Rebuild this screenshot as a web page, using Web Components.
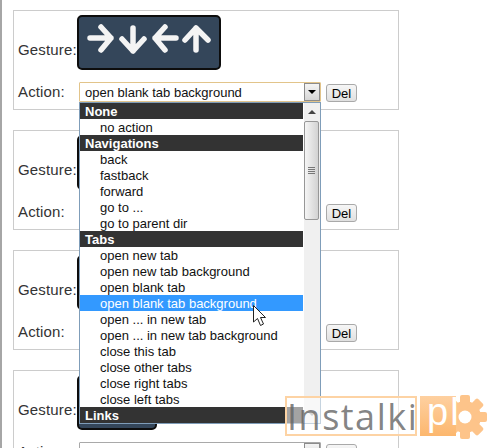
<!DOCTYPE html>
<html>
<head>
<meta charset="utf-8">
<style>
  html, body { margin: 0; padding: 0; height: 100%; overflow: hidden; background: #fff; }
</style>
</head>
<body>
<gesture-page>
  <gesture-card>
    <gesture-box slot="gesture" wide></gesture-box>
    <action-select slot="action" value="open blank tab background" focused>
      <drop-list>
        <list-row head>None</list-row>
        <list-row>no action</list-row>
        <list-row head>Navigations</list-row>
        <list-row>back</list-row>
        <list-row>fastback</list-row>
        <list-row>forward</list-row>
        <list-row>go to ...</list-row>
        <list-row>go to parent dir</list-row>
        <list-row head>Tabs</list-row>
        <list-row>open new tab</list-row>
        <list-row>open new tab background</list-row>
        <list-row>open blank tab</list-row>
        <list-row selected>open blank tab background</list-row>
        <list-row>open ... in new tab</list-row>
        <list-row>open ... in new tab background</list-row>
        <list-row>close this tab</list-row>
        <list-row>close other tabs</list-row>
        <list-row>close right tabs</list-row>
        <list-row>close left tabs</list-row>
        <list-row head>Links</list-row>
      </drop-list>
    </action-select>
  </gesture-card>
  <gesture-card>
    <gesture-box slot="gesture"></gesture-box>
    <action-select slot="action" value="back"></action-select>
  </gesture-card>
  <gesture-card>
    <gesture-box slot="gesture"></gesture-box>
    <action-select slot="action" value="forward"></action-select>
  </gesture-card>
  <gesture-card>
    <gesture-box slot="gesture"></gesture-box>
    <action-select slot="action" value="reload"></action-select>
  </gesture-card>
  <mouse-cursor></mouse-cursor>
  <instalki-mark></instalki-mark>
</gesture-page>

<script>
class GesturePage extends HTMLElement {
  constructor() {
    super();
    this.attachShadow({ mode: "open" });
    this.shadowRoot.innerHTML = `
      <style>
        :host {
          display: block;
          position: relative;
          height: 448px;
          box-sizing: border-box;
          border-left: 2px solid #a6a6a6;
          padding: 10px 0 0 11px;
          overflow: hidden;
          font-family: "Liberation Sans", Arial, sans-serif;
          color: #333;
        }
      </style>
      <slot></slot>
    `;
  }
}

class GestureCard extends HTMLElement {
  constructor() {
    super();
    this.attachShadow({ mode: "open" });
    this.shadowRoot.innerHTML = `
      <style>
        :host {
          display: block;
          width: 386px;
          height: 100px;
          box-sizing: border-box;
          border: 1px solid #ccc;
          margin-bottom: 20px;
          padding: 4px 0 0 3px;
        }
        .row { display: flex; align-items: center; }
        .label { box-sizing: border-box; padding-left: 1px; font-size: 15px; letter-spacing: .15px; line-height: 20px; }
        .gesture .label { width: 60px; padding-top: 15px; }
        .action { margin-top: 12px; }
        .action .label { width: 62px; }
        button {
          width: 31px;
          height: 18px;
          margin: 2px 0 0 5px;
          padding: 0;
          box-sizing: border-box;
          border: 1px solid #a9a9a9;
          border-radius: 3px;
          background: linear-gradient(#f6f6f6, #e0e0e0);
          font: 13px "Liberation Sans", Arial, sans-serif;
          color: #000;
        }
      </style>
      <div class="row gesture">
        <span class="label">Gesture:</span>
        <slot name="gesture"></slot>
      </div>
      <div class="row action">
        <span class="label">Action:</span>
        <slot name="action"></slot>
        <button>Del</button>
      </div>
    `;
  }
}

class GestureBox extends HTMLElement {
  constructor() {
    super();
    this.attachShadow({ mode: "open" });
    const wide = this.hasAttribute("wide");
    this.shadowRoot.innerHTML = `
      <style>
        :host {
          display: block;
          width: ${wide ? 144 : 80}px;
          height: 55px;
          box-sizing: border-box;
          border: 2px solid #0d0d0d;
          border-radius: 5px;
          background: #34465a;
        }
        svg { display: block; }
      </style>
      <svg width="140" height="51" viewBox="79 17 140 51" fill="none" stroke="#f4f4f4"
           stroke-width="5.5" stroke-linecap="round" stroke-linejoin="round">
        <path d="M90 38H111M101 27L111 38L101 50"/>
        <path d="M133 28V51M122 39L133 51L144 39"/>
        <path d="M176 38H155M165 27L155 38L165 50"/>
        <path d="M196 50V28M185 40L196 28L208 40"/>
      </svg>
    `;
  }
}

class ActionSelect extends HTMLElement {
  constructor() {
    super();
    this.attachShadow({ mode: "open" });
    const value = this.getAttribute("value");
    const edge = this.hasAttribute("focused") ? "#e2c48a" : "#a9a9a9";
    this.shadowRoot.innerHTML = `
      <style>
        :host {
          display: block;
          position: relative;
          width: 242px;
          height: 20px;
          box-sizing: border-box;
          border: 1px solid ${edge};
          border-radius: 1px;
          background: #fff;
          font-size: 13px;
          color: #111;
        }
        .box { display: flex; height: 18px; }
        .value { flex: 1; padding: 1px 0 0 5px; line-height: 18px; }
        .drop {
          width: 16px;
          display: flex;
          align-items: center;
          justify-content: center;
          box-sizing: border-box;
          border: 1px solid #8c8c8c;
          background: linear-gradient(#f4f4f4, #d6d6d6);
        }
        .drop i {
          border: 4px solid transparent;
          border-top: 4px solid #000;
          border-bottom: 0;
        }
      </style>
      <div class="box">
        <div class="value">${value}</div>
        <div class="drop"><i></i></div>
      </div>
      <slot></slot>
    `;
  }
}

class DropList extends HTMLElement {
  constructor() {
    super();
    this.attachShadow({ mode: "open" });
    this.shadowRoot.innerHTML = `
      <style>
        :host {
          display: flex;
          position: absolute;
          z-index: 10;
          left: -1px;
          top: 19px;
          width: 242px;
          height: 322px;
          box-sizing: border-box;
          border: 1px solid #7f9db9;
          background: #fff;
        }
        .rows { width: 224px; }
        .bar {
          width: 16px;
          background: #f0f0f0;
          display: flex;
          flex-direction: column;
        }
        .step {
          height: 18px;
          display: flex;
          align-items: center;
          justify-content: center;
        }
        .step i { border: 4px solid transparent; border-top: 0; border-bottom: 4px solid #444; }
        .step.down i { border-top: 4px solid #999; border-bottom: 0; }
        .thumb {
          height: 99px;
          width: 15px;
          box-sizing: border-box;
          border: 1px solid #979797;
          border-radius: 2px;
          background: linear-gradient(90deg, #f5f5f5, #d2d2d2);
          display: flex;
          flex-direction: column;
          align-items: center;
          justify-content: center;
          gap: 1px;
        }
        .thumb b { width: 7px; height: 1px; background: #777; }
        .fill { flex: 1; }
      </style>
      <div class="rows"><slot></slot></div>
      <div class="bar">
        <div class="step"><i></i></div>
        <div class="thumb"><b></b><b></b><b></b><b></b></div>
        <div class="fill"></div>
        <div class="step down"><i></i></div>
      </div>
    `;
  }
}

class ListRow extends HTMLElement {
  constructor() {
    super();
    this.attachShadow({ mode: "open" });
    this.shadowRoot.innerHTML = `
      <style>
        :host {
          display: block;
          height: 16px;
          margin-right: 1px;
          padding-left: 20px;
          font-size: 13px;
          line-height: 18px;
          color: #111;
          white-space: nowrap;
          overflow: hidden;
        }
        :host([head]) {
          padding-left: 5px;
          background: #333;
          color: #fff;
          font-weight: bold;
        }
        :host([selected]) { background: #3399ff; color: #fff; }
      </style>
      <slot></slot>
    `;
  }
}

class MouseCursor extends HTMLElement {
  constructor() {
    super();
    this.attachShadow({ mode: "open" });
    this.shadowRoot.innerHTML = `
      <style>
        :host { display: block; position: absolute; z-index: 20; left: 251px; top: 305px; }
        svg { display: block; }
      </style>
      <svg width="14" height="22" viewBox="0 0 14 22">
        <path d="M.5 .5V17L4.5 13.5L7.5 20.5L10.5 19L7.5 12.5H12.5Z" fill="#fff" stroke="#222" stroke-width="1"/>
      </svg>
    `;
  }
}

class InstalkiMark extends HTMLElement {
  constructor() {
    super();
    this.attachShadow({ mode: "open" });
    this.shadowRoot.innerHTML = `
      <style>
        :host {
          display: flex;
          position: absolute;
          z-index: 30;
          left: 283px;
          top: 396px;
          gap: 3px;
          height: 40px;
        }
        .name {
          width: 132px;
          box-sizing: border-box;
          border: 2px solid #fdd3a4;
          background: rgba(255, 255, 255, .55);
          font: 36px/37px "Open Sans", "Liberation Sans", sans-serif;
          letter-spacing: 1.5px;
          color: rgba(100, 100, 100, .8);
          text-align: center;
          white-space: nowrap;
        }
        .pl {
          position: relative;
          z-index: 1;
          width: 36px;
          box-sizing: border-box;
          padding-left: 7px;
          background: linear-gradient(#fed0a0, #fcb76e);
          color: #fff;
          font: 38px/32px "Liberation Sans", sans-serif;
          letter-spacing: 2px;
        }
        svg { display: block; margin: -1px 0 0 -6px; }
      </style>
      <div class="name">Instalki</div>
      <div class="pl">pl</div>
      <svg width="34" height="44" viewBox="0 0 34 44">
        <g fill="#fdc48a">
          <circle cx="12" cy="22" r="16"/>
          <rect x="7" y="0" width="10" height="44" rx="2"/>
          <rect x="-10" y="17" width="44" height="10" rx="2"/>
          <rect x="7" y="0" width="10" height="44" rx="2" transform="rotate(45 12 22)"/>
          <rect x="7" y="0" width="10" height="44" rx="2" transform="rotate(-45 12 22)"/>
        </g>
        <circle cx="12" cy="22" r="6.5" fill="#fff"/>
      </svg>
    `;
  }
}

customElements.define("gesture-page", GesturePage);
customElements.define("gesture-card", GestureCard);
customElements.define("gesture-box", GestureBox);
customElements.define("action-select", ActionSelect);
customElements.define("drop-list", DropList);
customElements.define("list-row", ListRow);
customElements.define("mouse-cursor", MouseCursor);
customElements.define("instalki-mark", InstalkiMark);
</script>
</body>
</html>
